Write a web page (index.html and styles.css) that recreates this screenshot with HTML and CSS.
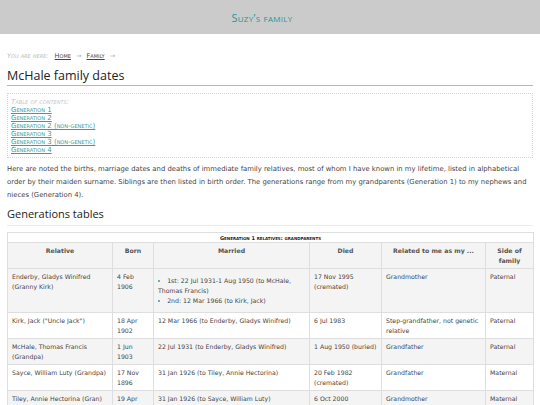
FILE: index.html
```html
<!DOCTYPE html>
<html lang="en">
<head>
    <meta charset="UTF-8">
    <title>McHale family dates - Suzy's family</title>
    <link rel="stylesheet" href="styles.css">
</head>
<body>
<div class="site-header">
    <a class="site-title" href="#">Suzy’s family</a>
</div>
<div class="page">
    <div class="crumbs">
        <span class="here">You are here:</span>
        <a href="#">Home</a> <span class="arrow">→</span>
        <a href="#">Family</a> <span class="arrow">→</span>
    </div>

    <h1>McHale family dates</h1>

    <div class="toc">
        <span class="toc-title">Table of contents:</span>
        <a href="#gen1">Generation 1</a>
        <a href="#gen2">Generation 2</a>
        <a href="#gen2n">Generation 2 (non-genetic)</a>
        <a href="#gen3">Generation 3</a>
        <a href="#gen3n">Generation 3 (non-genetic)</a>
        <a href="#gen4">Generation 4</a>
    </div>

    <p class="intro">Here are noted the births, marriage dates and deaths of immediate family relatives, most of whom I have known in my lifetime, listed in alphabetical order by their maiden surname. Siblings are then listed in birth order. The generations range from my grandparents (Generation 1) to my nephews and nieces (Generation 4).</p>

    <h2>Generations tables</h2>

    <table class="dates" id="gen1">
        <colgroup>
            <col class="c-rel"><col class="c-born"><col class="c-mar"><col class="c-died"><col class="c-relto"><col class="c-side">
        </colgroup>
        <tr class="cap"><th colspan="6">Generation 1 relatives: grandparents</th></tr>
        <tr class="head">
            <th>Relative</th>
            <th>Born</th>
            <th>Married</th>
            <th>Died</th>
            <th>Related to me as my ...</th>
            <th>Side of family</th>
        </tr>
        <tr class="odd">
            <td>Enderby, Gladys Winifred (Granny Kirk)</td>
            <td>4 Feb 1906</td>
            <td>
                <ul>
                    <li>1st: 22 Jul 1931-1 Aug 1950 (to McHale, Thomas Francis)</li>
                    <li>2nd: 12 Mar 1966 (to Kirk, Jack)</li>
                </ul>
            </td>
            <td>17 Nov 1995 (cremated)</td>
            <td>Grandmother</td>
            <td>Paternal</td>
        </tr>
        <tr>
            <td>Kirk, Jack ("Uncle Jack")</td>
            <td>18 Apr 1902</td>
            <td>12 Mar 1966 (to Enderby, Gladys Winifred)</td>
            <td>6 Jul 1983</td>
            <td>Step-grandfather, not genetic relative</td>
            <td>Paternal</td>
        </tr>
        <tr class="odd">
            <td>McHale, Thomas Francis (Grandpa)</td>
            <td>1 Jun 1903</td>
            <td>22 Jul 1931 (to Enderby, Gladys Winifred)</td>
            <td>1 Aug 1950 (buried)</td>
            <td>Grandfather</td>
            <td>Paternal</td>
        </tr>
        <tr>
            <td>Sayce, William Luty (Grandpa)</td>
            <td>17 Nov 1896</td>
            <td>31 Jan 1926 (to Tiley, Annie Hectorina)</td>
            <td>20 Feb 1982 (cremated)</td>
            <td>Grandfather</td>
            <td>Maternal</td>
        </tr>
        <tr class="odd">
            <td>Tiley, Annie Hectorina (Gran)</td>
            <td>19 Apr 1904</td>
            <td>31 Jan 1926 (to Sayce, William Luty)</td>
            <td>6 Oct 2000 (cremated)</td>
            <td>Grandmother</td>
            <td>Maternal</td>
        </tr>
    </table>
</div>
</body>
</html>
```

FILE: styles.css
```css
body {
    margin: 0;
    background: #fff;
    color: #444;
    font-family: "DejaVu Sans", Verdana, sans-serif;
    font-size: 6.85px;
}
a {
    color: #3a9d9d;
}

/* top band */
.site-header {
    background: #cbcbcb;
    height: 34px;
    display: flex;
    align-items: center;
    justify-content: center;
}
.site-title {
    font-family: "Open Sans", "DejaVu Sans", sans-serif;
    font-variant: small-caps;
    font-size: 11px;
    letter-spacing: 0.3px;
    color: #2a9595;
    text-decoration: none;
    margin-right: 16px;
}

.page {
    padding: 0 7px;
}

/* breadcrumb */
.crumbs {
    margin-top: 18px;
    font-size: 6.5px;
    font-variant: small-caps;
    color: #555;
}
.crumbs .here {
    font-style: italic;
    color: #bbb;
    margin-right: 4px;
}
.crumbs a {
    color: #444;
}
.crumbs .arrow {
    color: #aaa;
    margin: 0 3px;
}

h1 {
    font-family: "Open Sans", "DejaVu Sans", sans-serif;
    font-weight: normal;
    font-size: 12.5px;
    color: #222;
    margin: 7px 0 0;
    padding-bottom: 1px;
    border-bottom: 1px solid #8ccaca;
}

/* table of contents */
.toc {
    margin-top: 7px;
    border: 1px dotted #d4d4d4;
    padding: 4px 3px 3px;
    font-size: 7px;
    line-height: 8px;
    font-variant: small-caps;
}
.toc a {
    display: block;
}
.toc-title {
    display: block;
    font-style: italic;
    color: #c4c4c4;
}

.intro {
    line-height: 13px;
    margin: 5px 0 0;
}

h2 {
    font-family: "Open Sans", "DejaVu Sans", sans-serif;
    font-weight: normal;
    font-size: 11px;
    line-height: 15px;
    color: #222;
    margin: 4px 0 0;
    padding-bottom: 4px;
    border-bottom: 1px solid #ececec;
}

/* generation table */
.dates {
    margin-top: 6px;
    width: 526px;
    table-layout: fixed;
    border-collapse: collapse;
    font-size: 6.2px;
    line-height: 10px;
}
.c-rel { width: 105px; }
.c-born { width: 41px; }
.c-mar { width: 156px; }
.c-died { width: 72px; }
.c-relto { width: 104px; }
.c-side { width: 48px; }

.dates td, .dates th {
    border: 1px solid #dedede;
    padding: 3px 4px 2px;
    vertical-align: top;
    text-align: left;
}
.dates .cap th {
    font-size: 5px;
    line-height: 8px;
    padding: 1px 4px 0;
    text-align: center;
    font-variant: small-caps;
    color: #222;
}
.dates .head th {
    text-align: center;
    color: #555;
    background: #f4f4f4;
}
.dates .odd td {
    background: #f4f4f4;
}
.dates ul {
    margin: 4px 0;
    padding: 0;
    list-style-position: inside;
}
.dates li::marker {
    color: #3a9d9d;
}
```
